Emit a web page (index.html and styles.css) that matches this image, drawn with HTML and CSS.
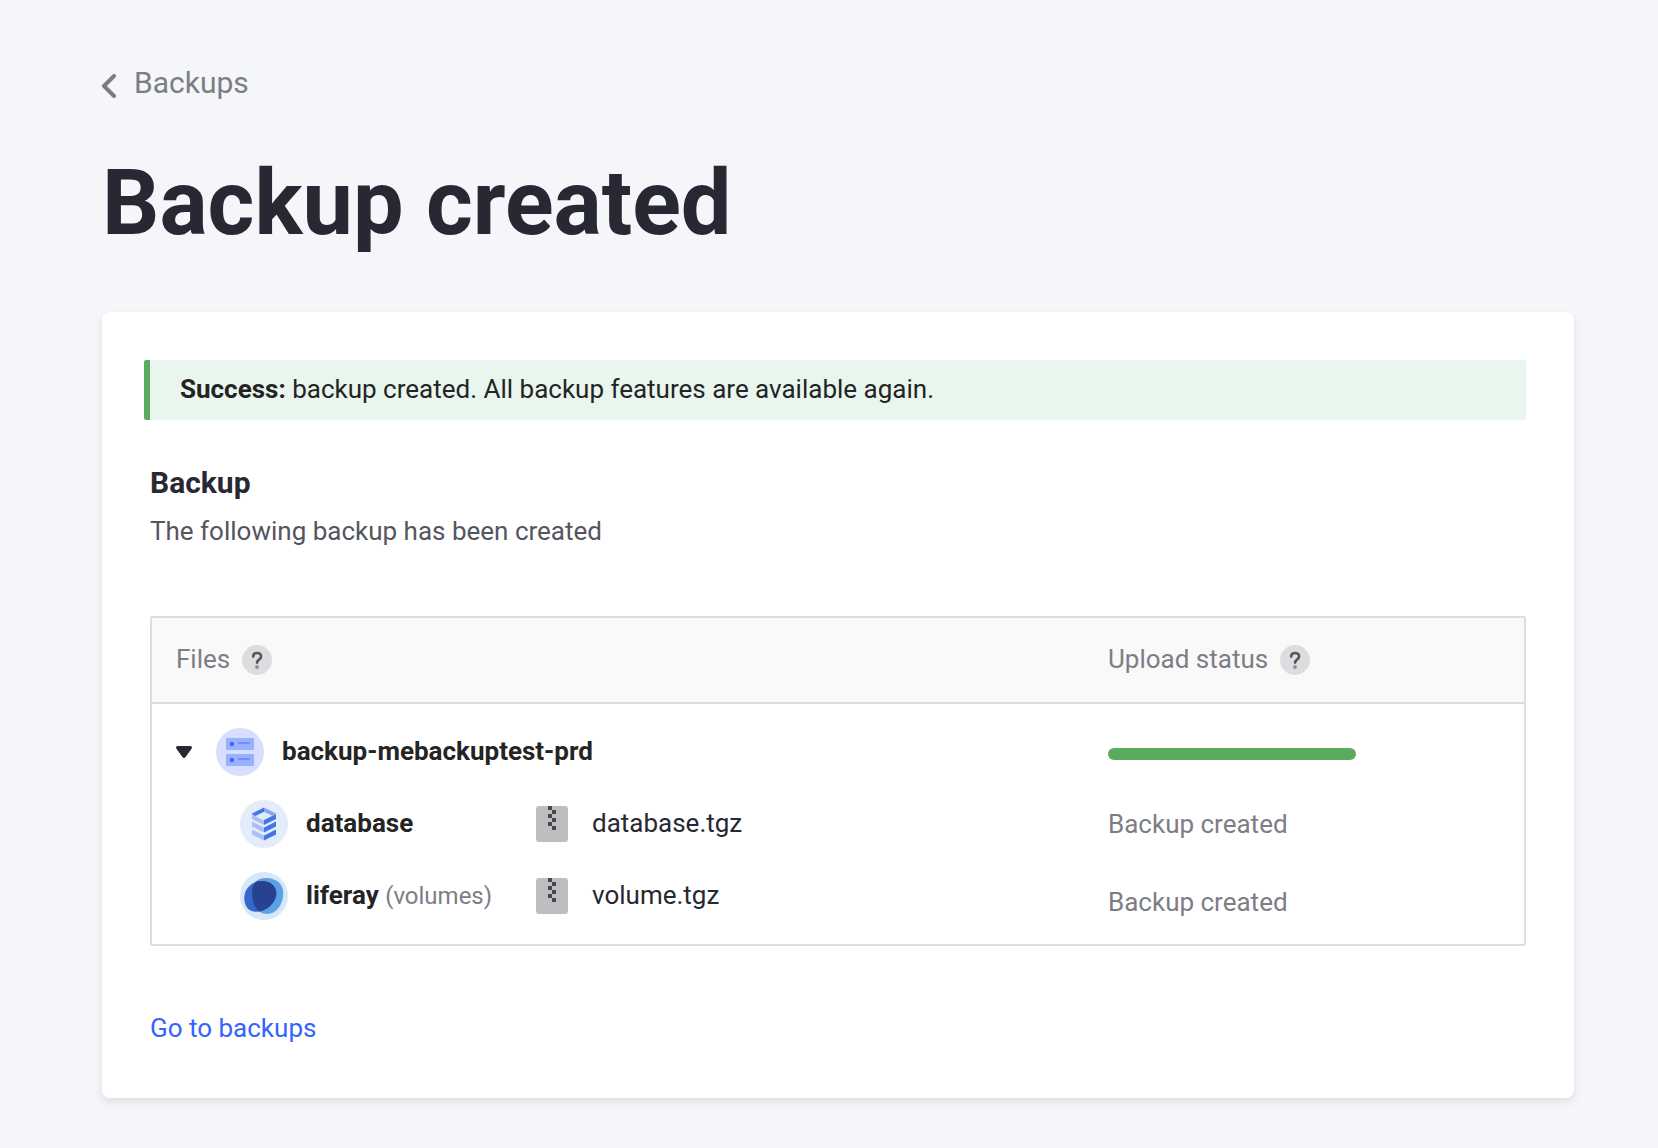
FILE: index.html
```html
<!DOCTYPE html>
<html lang="en">
<head>
  <meta charset="utf-8">
  <meta name="viewport" content="width=device-width, initial-scale=1">
  <title>Backup created</title>
  <link rel="stylesheet" href="styles.css">
</head>
<body>
  <main class="page">
    <nav class="breadcrumb">
      <a class="back-link" href="#backups">
        <svg class="back-icon" viewBox="0 0 16 24" aria-hidden="true"><path d="M12 2 2 12l10 10" fill="none" stroke="currentColor" stroke-width="4" stroke-linecap="round" stroke-linejoin="round"/></svg>
        <span>Backups</span>
      </a>
    </nav>
    <h1 class="page-title">Backup created</h1>

    <section class="card">
      <p class="alert" role="status"><strong>Success:</strong> backup created. All backup features are available again.</p>

      <h2 class="section-title">Backup</h2>
      <p class="section-text">The following backup has been created</p>

      <table class="backup-table">
        <thead>
          <tr>
            <th class="head-cell" scope="col">
              <div class="head-label">
                <span class="label">Files</span>
                <button class="help" type="button" aria-label="About files">
                  <svg viewBox="0 0 30 30" aria-hidden="true"><path d="M11.200 11.600c0-4.800 7.900-4.800 7.900-.2 0 3-4 3.200-4 6.200" fill="none" stroke="#54555f" stroke-width="2.600" stroke-linecap="round"/><circle cx="15" cy="22" r="1.900" fill="#8e8f96"/></svg>
                </button>
              </div>
            </th>
            <th class="head-cell status-cell" scope="col">
              <div class="head-label">
                <span class="label">Upload status</span>
                <button class="help" type="button" aria-label="About upload status">
                  <svg viewBox="0 0 30 30" aria-hidden="true"><path d="M11.200 11.600c0-4.800 7.900-4.800 7.900-.2 0 3-4 3.200-4 6.200" fill="none" stroke="#54555f" stroke-width="2.600" stroke-linecap="round"/><circle cx="15" cy="22" r="1.900" fill="#8e8f96"/></svg>
                </button>
              </div>
            </th>
          </tr>
        </thead>
        <tbody>
          <tr>
            <td class="files-cell">
              <div class="backup-row">
                <button class="toggle" type="button" aria-expanded="true" aria-label="Collapse files">
                  <svg viewBox="0 0 16 12" aria-hidden="true"><path d="M1.500 0h13q2.300.6.9 3L9.800 10.700q-1.800 2.400-3.600 0L.6 3q-1.400-2.400.9-3z" fill="#272833"/></svg>
                </button>
                <svg class="service-icon" viewBox="0 0 48 48" aria-hidden="true">
                  <circle cx="24" cy="24" r="24" fill="#d6dfff"/>
                  <rect x="10" y="10" width="28" height="12" rx="1" fill="#99b0ff"/>
                  <rect x="10" y="26" width="28" height="12" rx="1" fill="#99b0ff"/>
                  <circle cx="16" cy="16" r="2" fill="#2e5aff"/>
                  <circle cx="16" cy="32" r="2" fill="#2e5aff"/>
                  <path d="M23 15h10M23 31h10" stroke="#6a8dff" stroke-width="2" stroke-linecap="round"/>
                </svg>
                <strong class="label">backup-mebackuptest-prd</strong>
              </div>
              <ul class="file-list">
                <li class="file-row">
                  <svg class="service-icon" viewBox="0 0 48 48" aria-hidden="true">
                    <circle cx="24" cy="24" r="24" fill="#e4ebfb"/>
                    <path d="M12 14.500 24 20.500v4.500L12 19zM12 21.500l12 6v5l-12-6zM12 29.500l12 6v5l-12-6z" fill="#a9c0f2"/>
                    <path d="M36 14 24 20v5l12-6zM36 21.500l-12 6v5l12-6zM36 29.500l-12 6v5l12-6z" fill="#4277e6"/>
                    <path d="M24 7.500v4.200L15.400 16 12 14.300v-.8z" fill="#4277e6"/>
                    <path d="M24 7.500v4.200l8.600 4.300 3.400-1.700v-.8z" fill="#86a7ee"/>
                  </svg>
                  <span class="label service-name"><strong>database</strong></span>
                  <svg class="file-icon" viewBox="0 0 32 36" aria-hidden="true"><rect width="32" height="36" rx="3" fill="#bebec0"/><path d="M12 0h4v4h-4zM16 4h4v4h-4zM12 8h4v4h-4zM16 12h4v4h-4zM12 16h4v4h-4zM16 20h4v4h-4z" fill="#47484c"/></svg>
                  <span class="label">database.tgz</span>
                </li>
                <li class="file-row">
                  <svg class="service-icon" viewBox="0 0 48 48" aria-hidden="true">
                    <defs><clipPath id="overlap"><path d="M25 6C36 5.500 43.300 12 43.300 21 43.300 33 36 42 27 42 18 42 12 33 12 21 12 12 16 6.500 25 6z"/></clipPath></defs>
                    <circle cx="24" cy="24" r="24" fill="#d7e7f8"/>
                    <path d="M25 6C36 5.500 43.300 12 43.300 21 43.300 33 36 42 27 42 18 42 12 33 12 21 12 12 16 6.500 25 6z" fill="#5aa2e3"/>
                    <path d="M21 9C30 8.500 36.300 14 36.300 21 36.300 31 26 39.800 16 39.800 8.500 39.800 4.300 34 4.300 26 4.300 17 11 9.500 21 9z" fill="#3567cc"/>
                    <path d="M21 9C30 8.500 36.300 14 36.300 21 36.300 31 26 39.800 16 39.800 8.500 39.800 4.300 34 4.300 26 4.300 17 11 9.500 21 9z" fill="#29428f" clip-path="url(#overlap)"/>
                  </svg>
                  <span class="label service-name"><strong>liferay</strong> <small class="service-kind">(volumes)</small></span>
                  <svg class="file-icon" viewBox="0 0 32 36" aria-hidden="true"><rect width="32" height="36" rx="3" fill="#bebec0"/><path d="M12 0h4v4h-4zM16 4h4v4h-4zM12 8h4v4h-4zM16 12h4v4h-4zM12 16h4v4h-4zM16 20h4v4h-4z" fill="#47484c"/></svg>
                  <span class="label">volume.tgz</span>
                </li>
              </ul>
            </td>
            <td class="status-cell">
              <div class="status-list">
                <progress class="upload-bar" value="100" max="100" aria-label="Upload progress"></progress>
                <span>Backup created</span>
                <span>Backup created</span>
              </div>
            </td>
          </tr>
        </tbody>
      </table>

      <a class="card-link" href="#backups">Go to backups</a>
    </section>
  </main>
</body>
</html>
```
FILE: styles.css
```css
* {
  box-sizing: border-box;
}

body {
  margin: 0;
  background: #f4f6fa;
  color: #272833;
  font-family: Roboto, "Liberation Sans", sans-serif;
  font-size: 26px;
  line-height: 30px;
}

h1, h2, p, ul {
  margin: 0;
  padding: 0;
}

svg {
  display: block;
  flex: none;
}

button {
  padding: 0;
  border: 0;
  background: none;
  flex: none;
  cursor: pointer;
}

a {
  text-decoration: none;
}

.page {
  padding: 65px 84px 50px 102px;
}

.breadcrumb {
  display: flex;
  font-size: 30px;
  line-height: 36px;
}

.back-link {
  display: flex;
  align-items: center;
  gap: 16px;
  color: #7d7e85;
}

.back-icon {
  width: 16px;
  height: 24px;
  margin-top: 6px;
}

.page-title {
  margin: 49px 0 54px;
  font-size: 90px;
  line-height: 108px;
  font-weight: 700;
}

.card {
  padding: 48px;
  background: #fff;
  border-radius: 8px;
  box-shadow: 0 4px 8px rgba(39, 40, 51, 0.1);
}

.alert {
  margin-left: -6px;
  padding: 14px 30px 16px;
  border-left: 6px solid #5aab5e;
  border-radius: 2px;
  background: #e9f6ee;
  color: #242424;
}

.section-title {
  margin-top: 45px;
  font-size: 30px;
  line-height: 36px;
}

.section-text {
  margin-top: 15px;
  color: #54555f;
}

.backup-table {
  width: 100%;
  margin-top: 70px;
  border: 2px solid #dedede;
  border-radius: 2px;
  border-spacing: 0;
  table-layout: fixed;
}

.head-cell {
  padding: 26px 24px;
  border-bottom: 2px solid #dedede;
  background: #f9f9f9;
  color: #7d7e85;
  font-weight: 400;
  text-align: left;
}

.head-label {
  display: flex;
  align-items: center;
  gap: 12px;
}

.label {
  padding-bottom: 2px;
}

.help {
  width: 30px;
  height: 30px;
  border-radius: 50%;
  background: #dcddde;
}

.files-cell,
td.status-cell {
  padding: 24px;
  vertical-align: top;
}

.status-cell {
  width: 440px;
}

.backup-row,
.file-row {
  display: flex;
  align-items: center;
}

.toggle {
  width: 16px;
  height: 12px;
  margin-right: 24px;
}

.service-icon {
  width: 48px;
  height: 48px;
  margin-right: 18px;
}

.file-list {
  display: grid;
  gap: 24px;
  margin-top: 24px;
  padding-left: 64px;
  list-style: none;
}

strong {
  color: #242424;
}

.service-name {
  width: 230px;
}

.service-kind {
  color: #7d7e85;
  font-size: 24px;
}

.file-icon {
  width: 32px;
  height: 36px;
  margin-right: 24px;
}

.status-list {
  display: flex;
  flex-direction: column;
  gap: 48px;
  padding-top: 20px;
  color: #7d7e85;
}

.upload-bar {
  appearance: none;
  width: 248px;
  height: 12px;
  margin-bottom: 1px;
  border: 0;
  border-radius: 6px;
  overflow: hidden;
}

.upload-bar::-webkit-progress-bar {
  background: #e7e7ed;
}

.upload-bar::-webkit-progress-value {
  background: #5aab5e;
}

.card-link {
  display: inline-block;
  margin: 67px 0 7px;
  color: #3364ff;
}
```
